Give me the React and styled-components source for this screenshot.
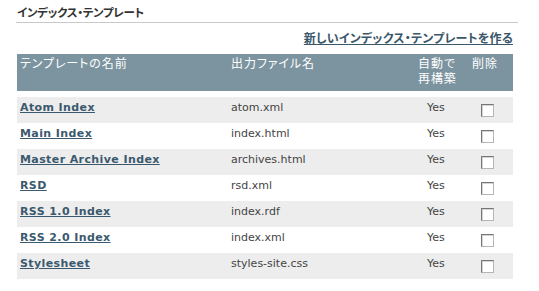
import React from 'react'
import styled, { createGlobalStyle } from 'styled-components'

const GlobalStyle = createGlobalStyle`
  body {
    margin: 0;
    background: #ffffff;
    font-family: "DejaVu Sans", "Noto Sans CJK JP", sans-serif;
  }
`

const Page = styled.div`
  width: 502px;
  padding: 6px 0 0 16px;
`

const Title = styled.h2`
  margin: 0;
  font-size: 11.5px;
  line-height: 15px;
  font-weight: bold;
  color: #333;
  font-feature-settings: "palt";
  letter-spacing: -0.3px;
  padding: 0 0 1px 1px;
  border-bottom: 1px solid #c9c9c9;
`

const Actions = styled.div`
  display: flex;
  justify-content: flex-end;
  padding: 8px 5px 0 0;
  height: 23px;
`

const NewLink = styled.a`
  font-size: 12px;
  line-height: 16px;
  font-weight: bold;
  color: #3a566a;
  text-decoration: underline;
  font-feature-settings: "palt";
  letter-spacing: 0.2px;
  cursor: pointer;
`

const Table = styled.div`
  margin-left: 1px;
  width: 496px;
`

const cols = '211px 187px 54px 44px'

const HeadRow = styled.div`
  display: grid;
  grid-template-columns: ${cols};
  height: 37px;
  background: #7c94a0;
  margin-bottom: 6px;
`

const HeadCell = styled.div`
  padding: 3px 0 0 3px;
  font-size: 12px;
  line-height: 15px;
  color: #ffffff;
  font-feature-settings: "palt";
  letter-spacing: 0.9px;
`

const Row = styled.div`
  display: grid;
  grid-template-columns: ${cols};
  height: 26px;
  background: ${p => (p.$odd ? '#ededed' : '#ffffff')};
`

const Cell = styled.div`
  padding: 4px 0 0 ${p => p.$pad || 3}px;
  font-size: 11px;
  line-height: 14px;
  color: #444;
`

const NameLink = styled.a`
  font-weight: bold;
  font-size: 11px;
  letter-spacing: 0.4px;
  color: #3b596e;
  text-decoration: underline;
  cursor: pointer;
`

const Check = styled.input.attrs({ type: 'checkbox' })`
  appearance: none;
  margin: 3px 0 0 0;
  width: 13px;
  height: 13px;
  background: #fff;
  border: 1px solid #b5b5b5;
  border-top-color: #777;
  border-left-color: #777;
  box-shadow: inset 1px 1px 0 #d4d4d4;
`

const templates = [
  { name: 'Atom Index', file: 'atom.xml' },
  { name: 'Main Index', file: 'index.html' },
  { name: 'Master Archive Index', file: 'archives.html' },
  { name: 'RSD', file: 'rsd.xml' },
  { name: 'RSS 1.0 Index', file: 'index.rdf' },
  { name: 'RSS 2.0 Index', file: 'index.xml' },
  { name: 'Stylesheet', file: 'styles-site.css' },
]

export default function App () {
  return (
    <Page>
      <GlobalStyle />
      <Title>インデックス・テンプレート</Title>
      <Actions>
        <NewLink>新しいインデックス・テンプレートを作る</NewLink>
      </Actions>
      <Table>
        <HeadRow>
          <HeadCell>テンプレートの名前</HeadCell>
          <HeadCell>出力ファイル名</HeadCell>
          <HeadCell>自動で<br />再構築</HeadCell>
          <HeadCell>削除</HeadCell>
        </HeadRow>
        {templates.map((t, i) => (
          <Row key={t.name} $odd={i % 2 === 0}>
            <Cell><NameLink>{t.name}</NameLink></Cell>
            <Cell>{t.file}</Cell>
            <Cell $pad={12}>Yes</Cell>
            <Cell $pad={12}><Check /></Cell>
          </Row>
        ))}
      </Table>
    </Page>
  )
}
